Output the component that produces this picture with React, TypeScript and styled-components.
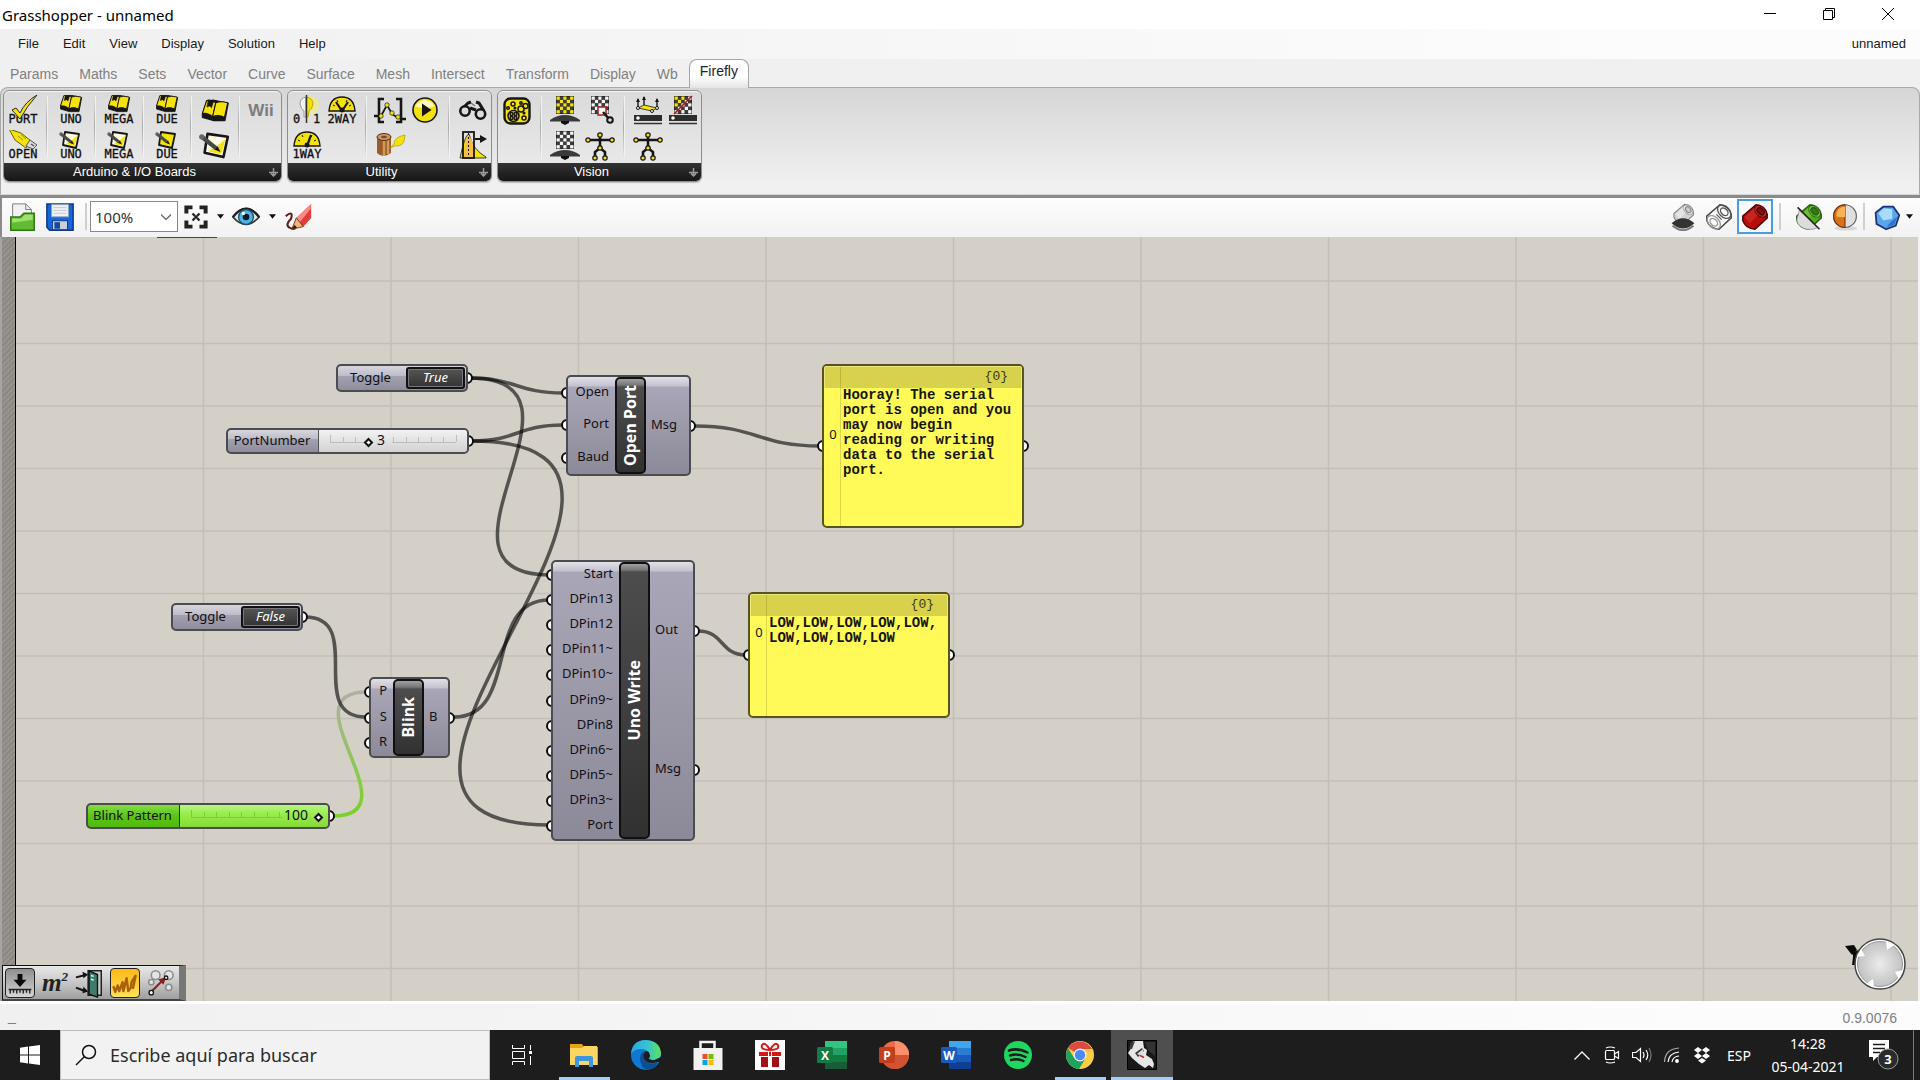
import React from "react";
import styled, { createGlobalStyle, css } from "styled-components";

const UI = `"Noto Sans", "Open Sans", sans-serif`;
const CLASSIC = `"Liberation Sans", Arial, sans-serif`;
const MONO = `"Liberation Mono", "Courier New", monospace`;

const GlobalStyle = createGlobalStyle`
  * { box-sizing: border-box; }
  body { margin: 0; background: #f0f0f0; font-family: ${UI}; }
  button, input, select { font: inherit; color: inherit; margin: 0; }
  button { border: 0; padding: 0; background: none; cursor: default; }
  svg { display: block; }
`;

const Shell = styled.div`
  display: flex;
  flex-direction: column;
  min-height: 100vh;
  overflow: hidden;
`;

/* ---------- window title and menu ---------- */

const TitleBar = styled.header`
  display: flex;
  justify-content: space-between;
  height: 29px;
  background: #fff;
`;
const Title = styled.h1`
  margin: 0;
  padding: 2px;
  font: 400 15px/26px ${UI};
  color: #000;
  white-space: nowrap;
`;
const WindowButtons = styled.div`
  display: flex;
  padding-right: 3px;
`;
const WindowButton = styled.button`
  display: grid;
  place-items: center;
  width: 59px;
  height: 28px;
`;
const MenuBar = styled.nav`
  display: flex;
  align-items: center;
  gap: 24px;
  height: 30px;
  padding: 0 14px 0 18px;
  background: linear-gradient(90deg, #f0f0f0, #fcfcfc 85%);
  font: 13px/20px ${CLASSIC};
  color: #1a1a1a;
`;
const MenuButton = styled.button<{ $end?: boolean }>`
  white-space: nowrap;
  margin-left: ${(p) => (p.$end ? "auto" : "0")};
`;

/* ---------- ribbon ---------- */

const Tabs = styled.div`
  display: flex;
  align-items: flex-end;
  gap: 1px;
  height: 28px;
  background: #f0f0f0;
  font: 14px/20px ${CLASSIC};
`;
const Tab = styled.button<{ $active?: boolean }>`
  height: 27px;
  padding: 0 10px;
  color: #808080;
  white-space: nowrap;
  ${(p) =>
    p.$active &&
    css`
      position: relative;
      height: 29px;
      margin-bottom: -1px;
      padding-bottom: 6px;
      color: #1c2033;
      background: linear-gradient(#fff 60%, #e4e4e4);
      border: 1px solid #a6a6a6;
      border-bottom: 0;
      border-radius: 8px 8px 0 0;
    `}
`;
const Ribbon = styled.div`
  display: flex;
  align-items: flex-start;
  gap: 5px;
  height: 108px;
  padding: 2px;
  border: 1px solid #a9a9a9;
  border-bottom-color: transparent;
  border-radius: 8px 8px 0 0;
  background: linear-gradient(#d6d6d6, #f0f0f0 90%);
`;
const Group = styled.section`
  display: flex;
  flex-direction: column;
  height: 92px;
  border: 1px solid #8f8f8f;
  border-radius: 6px;
  overflow: hidden;
  background: linear-gradient(#dadada, #ececec);
  box-shadow: 0 1px 1px #bbb, inset 0 1px 0 #f6f6f6;
`;
const GroupIcons = styled.div`
  display: flex;
  padding: 2px 1px 0;
  height: 73px;
`;
const IconColumn = styled.div`
  display: flex;
  flex-direction: column;
`;
const ToolButton = styled.button`
  display: grid;
  place-items: center;
  width: 35px;
  height: 35px;
`;
const Separator = styled.i`
  width: 2px;
  height: 62px;
  margin: 3px 5px 0 6px;
  background: linear-gradient(transparent, #a8a8a8 50%, transparent);
  border-right: 1px solid #f2f2f2;
`;
const GroupTitle = styled.div`
  display: flex;
  align-items: center;
  height: 18px;
  background: linear-gradient(#333, #161616);
  color: #fff;
  font: 13px/16px ${CLASSIC};
`;
const GroupName = styled.span`
  flex: 1;
  text-align: center;
  white-space: nowrap;
`;
const GroupMore = styled.button`
  width: 16px;
  color: #9a9a9a;
  display: grid;
  place-items: center;
`;

/* ---------- canvas toolbar ---------- */

const ToolBar = styled.div`
  display: flex;
  align-items: center;
  height: 42px;
  padding: 0 5px 2px 4px;
  border-top: 3px solid #8b8b8b;
  border-left: 2px solid #8b8b8b;
  background: linear-gradient(#fdfdfd, #f2f2f2);
`;
const BarButton = styled.button<{ $w?: number; $on?: boolean }>`
  display: grid;
  place-items: center;
  width: ${(p) => p.$w ?? 36}px;
  height: 35px;
  border: ${(p) => (p.$on ? "2px solid #4a9be0" : "0")};
  background: ${(p) => (p.$on ? "#f6f8fb" : "none")};
`;
const BarLine = styled.i<{ $gap: number }>`
  width: 2px;
  height: 27px;
  margin: 0 ${(p) => p.$gap}px;
  background: #cfcfcf;
`;
const ZoomField = styled.div`
  display: flex;
  align-items: center;
  width: 88px;
  height: 31px;
  border: 1px solid #8a8a8a;
  background: #fff;
`;
const ZoomSelect = styled.select`
  flex: 1;
  min-width: 0;
  height: 29px;
  padding: 0 4px;
  border: 0;
  appearance: none;
  background: none;
  font: 15px/20px ${UI};
  color: #333;
`;
const Push = styled.span`
  flex: 1;
`;

/* ---------- canvas ---------- */

const Canvas = styled.main`
  position: relative;
  flex: 1 0 764px;
  overflow: hidden;
  background: #d4d0c8;
  border-right: 2px solid #f4f4f4;
`;
const Backdrop = styled.svg`
  position: absolute;
  inset: 0;
  width: 100%;
  height: 100%;
`;
const Rail = styled.div`
  position: absolute;
  inset: 0 auto 0 0;
  width: 16px;
  border-left: 2px solid #a5a5a5;
  border-right: 1px solid #000;
  background: repeating-linear-gradient(135deg, #8b8982 0 2px, #96948d 2px 4px);
`;
const TabHint = styled.i`
  position: absolute;
  left: 157px;
  top: 0;
  width: 60px;
  height: 1px;
  background: #444;
`;

const Place = styled.div<{ $x: number; $y: number; $w: number; $h: number }>`
  position: absolute;
  isolation: isolate;
  left: ${(p) => p.$x}px;
  top: ${(p) => p.$y}px;
  width: ${(p) => p.$w}px;
  height: ${(p) => p.$h}px;
`;
const Body = styled.div<{ $tone?: "green" | "short" }>`
  display: flex;
  width: 100%;
  height: 100%;
  border: 2px solid #4c4b50;
  border-radius: 5px;
  font: 13px/18px ${UI};
  color: #121014;
  background: ${(p) =>
    p.$tone === "green"
      ? "linear-gradient(#84dc45, #5cc417 50%, #52b90d)"
      : p.$tone === "short"
        ? "linear-gradient(#d8d7df, #bdbcc8 40%, #a3a2b1 42%, #8f8d9b)"
        : "linear-gradient(#e2e1e8, #c3c2cd 9px, #a9a7b7 10px, #8c8a98)"};
`;
const Column = styled.div<{ $side: "in" | "out" }>`
  display: flex;
  flex-direction: column;
  flex: ${(p) => (p.$side === "out" ? "1" : "none")};
`;
const PinRow = styled.div<{ $side: "in" | "out"; $w?: number }>`
  position: relative;
  flex: 1;
  display: flex;
  align-items: center;
  justify-content: ${(p) => (p.$side === "in" ? "flex-end" : "flex-start")};
  width: ${(p) => (p.$w ? `${p.$w}px` : "auto")};
  padding: 0 6px 4px 5px;
`;
const Grip = styled.i<{ $side: "in" | "out" }>`
  position: absolute;
  z-index: -1;
  top: calc(50% - 6px);
  ${(p) => (p.$side === "in" ? "left" : "right")}: -7px;
  width: 12px;
  height: 12px;
  border: 2px solid #0a0a0a;
  border-radius: 50%;
  background: #fff;
`;
const Core = styled.div`
  display: grid;
  place-items: center;
  width: 31px;
  padding-right: 2px;
  border: 2px solid #101010;
  border-radius: 5px;
  background: linear-gradient(#a0a0a0, #777 6px, #4d4d4d 8px, #313131);
  color: #fff;
`;
const CoreText = styled.span`
  writing-mode: vertical-rl;
  transform: rotate(180deg);
  font: 700 16px/20px ${UI};
  white-space: nowrap;
`;
const NodeLabel = styled.label<{ $w: number }>`
  display: grid;
  place-items: center;
  width: ${(p) => p.$w}px;
  padding: 0 2px 3px 0;
  white-space: nowrap;
`;
const ToggleButton = styled.button`
  flex: 1;
  margin: 1px;
  padding-bottom: 3px;
  border: 2px solid #111;
  outline: 1px solid #77767e;
  outline-offset: -3px;
  border-radius: 3px;
  background: linear-gradient(#555, #333);
  color: #fff;
  font: italic 13px/16px ${UI};
`;
const SliderTrack = styled.div<{ $green?: boolean }>`
  position: relative;
  flex: 1;
  display: flex;
  align-items: center;
  justify-content: center;
  border-left: 1px solid ${(p) => (p.$green ? "#1d3b0b" : "#555")};
  border-radius: 0 3px 3px 0;
  background: ${(p) =>
    p.$green
      ? "linear-gradient(#b9f586, #97ee4c 40%, #86da35)"
      : "linear-gradient(#f2f2f2, #d2d2d2)"};
`;
const Ticks = styled.svg`
  position: absolute;
  top: 5px;
  left: calc(50% - 64px);
`;
const Range = styled.input`
  position: relative;
  width: 134px;
  height: 16px;
  appearance: none;
  background: none;
  &::-webkit-slider-thumb {
    appearance: none;
    width: 7px;
    height: 7px;
    margin: 2px 1px 0;
    border: 2px solid #111;
    background: #fff;
    transform: rotate(45deg);
  }
`;
const SliderValue = styled.output<{ $left: number }>`
  position: absolute;
  top: 0;
  left: ${(p) => p.$left}px;
  font: 14px/20px ${UI};
`;

/* ---------- text panels ---------- */

const PanelBody = styled.div`
  display: flex;
  flex-direction: column;
  width: 100%;
  height: 100%;
  border: 2px solid #56541f;
  border-radius: 5px;
  background: linear-gradient(90deg, transparent 16px, #dcd64a 16px 17px, transparent 17px), #fffa58;
  overflow: hidden;
`;
const PanelHead = styled.div`
  height: 22px;
  padding-right: 13px;
  border: 1px solid #ece67c;
  border-bottom: 0;
  background: linear-gradient(90deg, transparent 15px, #bdb741 15px 16px, transparent 16px), #d7d14c;
  text-align: right;
  font: 13px/20px ${MONO};
  color: #3d3b14;
`;
const PanelItem = styled.div`
  display: grid;
  grid-template-columns: 18px 1fr;
  align-items: center;
  font: 14px/15px ${MONO};
  color: #15150a;
`;
const PanelIndex = styled.span`
  padding-top: 3px;
  font: 13px/15px ${UI};
  text-align: center;
`;
const PanelText = styled.p`
  margin: 0;
  padding: 0 8px 0 1px;
  font-weight: 700;
  white-space: pre-line;
`;
const GripHost = styled.div<{ $side: "in" | "out"; $y: number }>`
  position: absolute;
  top: ${(p) => p.$y}px;
  ${(p) => (p.$side === "in" ? "left" : "right")}: 2px;
`;

/* ---------- overlays ---------- */

const Palette = styled.div`
  position: absolute;
  left: 2px;
  bottom: 0;
  display: flex;
  align-items: center;
  gap: 5px;
  width: 184px;
  height: 36px;
  padding-left: 2px;
  border: 1px solid #111;
  border-bottom: 2px solid #444;
  border-right: 7px solid #777;
  background: linear-gradient(#e8e8e8, #cfcfcf 40%, #9f9f9f);
`;
const PaletteButton = styled.button<{ $fill?: string }>`
  display: grid;
  place-items: center;
  width: 30px;
  height: 30px;
  border-radius: 4px;
  ${(p) =>
    p.$fill &&
    css`
      border: 1px solid #222;
      background: ${p.$fill};
    `}
`;
const Compass = styled.svg`
  position: absolute;
  right: 12px;
  bottom: 8px;
`;

/* ---------- status and taskbar ---------- */

const StatusBar = styled.footer`
  display: flex;
  justify-content: space-between;
  height: 29px;
  padding: 2px 23px 0 8px;
  border-top: 3px solid #fff;
  background: linear-gradient(90deg, #f0f0f0, #fcfcfc 90%);
  font: 14px/24px ${CLASSIC};
  color: #7c8086;
`;
const StatusHint = styled.span`
  line-height: 20px;
`;
const TaskBar = styled.footer`
  display: flex;
  height: 50px;
  background: #1d1d1d;
  color: #fff;
`;
const StartButton = styled.button`
  display: grid;
  place-items: center;
  width: 60px;
`;
const Search = styled.label`
  display: flex;
  align-items: center;
  gap: 13px;
  width: 430px;
  margin-right: 1px;
  padding-left: 14px;
  border: 1px solid #bdbdbd;
  background: #f2f2f2;
`;
const SearchInput = styled.input`
  flex: 1;
  min-width: 0;
  padding: 0;
  border: 0;
  outline: 0;
  background: none;
  font: 18px/26px ${UI};
  &::placeholder { color: #2b2b2b; opacity: 1; }
`;
const Task = styled.button<{ $state?: "open" | "active" }>`
  display: grid;
  place-items: center;
  width: 62px;
  background: ${(p) => (p.$state === "active" ? "#4f4f4f" : "none")};
  ${(p) =>
    p.$state &&
    css`
      background-image: linear-gradient(#a5cdf8, #a5cdf8);
      background-size: ${p.$state === "active" ? "62px" : "51px"} 3px;
      background-position: center bottom;
      background-repeat: no-repeat;
    `}
`;
const Tray = styled.div`
  display: flex;
  align-items: center;
  margin-left: auto;
  font: 14px/23px ${UI};
`;
const TrayButton = styled.button<{ $w?: number }>`
  display: grid;
  place-items: center;
  width: ${(p) => p.$w ?? 30}px;
  height: 50px;
  text-align: center;
  white-space: nowrap;
`;
const ShowDesktop = styled.button`
  width: 7px;
  height: 50px;
  border-left: 1px solid #777;
`;

/* ---------- ribbon drawings ---------- */

const Y = "#f4e20a";
const K = "#161616";

const Svg = ({ children, s = 32 }: { children: React.ReactNode; s?: number }) => (
  <svg width={s} height={s} viewBox="0 0 32 32" aria-hidden="true">
    {children}
  </svg>
);
const Caption = ({ children }: { children: string }) => (
  <text x="16" y="28" textAnchor="middle" fontFamily="DejaVu Sans Mono, monospace" fontSize="12" fill="#111" stroke="#111" strokeWidth=".3">
    {children}
  </text>
);
const BookShape = () => (
  <g stroke={K} strokeLinejoin="round">
    <path d="M4 14 8 2 14 1 28 4 25 20 14 20 4 17Z" fill={K} strokeWidth="1" />
    <path d="M4 13.500 8 1.500 Q12 0 16.500 3.500 L13.500 16.500 Q9 12.500 4 13.500Z" fill={Y} strokeWidth="1" />
    <path d="M16.500 3.500 Q21 1.500 27.500 3.500 L24.500 17 Q19 14 13.500 16.500Z" fill={Y} strokeWidth="1" />
    <path d="M9.500 1 14.500 2 12.500 8 10.800 6.500 8.200 7.500Z" fill={K} strokeWidth=".5" />
  </g>
);
const NoteShape = ({ yellow }: { yellow?: boolean }) => (
  <g>
    <path d="M10 2 24 4 21 18 8 15Z" fill={yellow ? Y : "#fffce0"} stroke={K} strokeWidth="1.800" strokeLinejoin="round" />
    <path d="M22.500 5.500 19.500 16 10.500 14 16 11Z" fill={Y} />
    <path d="M6 4 16 12" stroke="#4a4a4a" strokeWidth="3" />
    <path d="M15 13 19 14.500 17 10.500Z" fill={K} />
    <circle cx="6" cy="4" r="1.800" fill="#666" />
  </g>
);
const Book = ({ text }: { text?: string }) => (
  <Svg>
    {text ? (
      <>
        <g transform="translate(2 -1) scale(.88)"><BookShape /></g>
        <Caption>{text}</Caption>
      </>
    ) : (
      <g transform="translate(-1 4) scale(1.080)"><BookShape /></g>
    )}
  </Svg>
);
const Note = ({ text, yellow }: { text?: string; yellow?: boolean }) => (
  <Svg>
    {text ? (
      <>
        <NoteShape yellow={yellow} />
        <Caption>{text}</Caption>
      </>
    ) : (
      <g transform="translate(-6 1) scale(1.450)"><NoteShape /></g>
    )}
  </Svg>
);
const PortCheck = () => (
  <Svg>
    <Caption>PORT</Caption>
    <path d="M5 15 9 13 13 18 Q18 7 30 0 Q20 11 13 24Z" fill={Y} stroke={K} strokeWidth=".9" />
  </Svg>
);
const PortOpen = () => (
  <Svg>
    <Caption>OPEN</Caption>
    <path d="M2 -1 14 3 24 11 19 18 8 10Z" fill={Y} stroke="#6b6206" />
    <path d="M11 6 16 10 M14 4.500 19 9" stroke="#a39708" />
    <path d="M23 10 30 15 26 19 19 16Z" fill="#d8dce2" stroke="#555" />
    <path d="M24 14 27 16" stroke="#555" strokeWidth="1.500" />
  </Svg>
);
const Wii = () => (
  <Svg>
    <text x="14" y="21" textAnchor="middle" fontFamily="Liberation Sans, sans-serif" fontWeight="700" fontSize="17" fill="#7c7c7c">Wii</text>
  </Svg>
);
const Bulb = () => (
  <Svg>
    <circle cx="19" cy="10" r="9" fill="#f6f06a" opacity=".6" />
    <path d="M15 2 Q9 3 9 9 Q10 14 13 16 L13 22 15 22Z" fill="#f3f3ee" stroke="#999" />
    <path d="M15 2 Q22 3 22 9 Q21 14 18 16 L17 22 15 22Z" fill={Y} stroke="#b3a50c" />
    <path d="M15.500 0V28" stroke="#333" strokeWidth="1.500" />
    <g fontFamily="DejaVu Sans Mono, monospace" fontSize="12" fill="#111" stroke="#111" strokeWidth=".3">
      <text x="2" y="28">0</text>
      <text x="22" y="28">1</text>
    </g>
  </Svg>
);
const Gauge = ({ text, both }: { text: string; both?: boolean }) => (
  <Svg>
    <path d="M3 16 Q4 2 16 2 Q28 2 29 16Z" fill={Y} stroke={K} strokeWidth="1.400" />
    <path d="M7 10 9 11 M11 5 12 7 M21 5 20 7 M25 10 23 11" stroke={K} />
    <path d={both ? "M16 16 10 7 M16 16 22 7" : "M16 16 20 5"} stroke={K} strokeWidth="2.200" />
    <circle cx="16" cy="15" r="2.500" fill={K} />
    <Caption>{text}</Caption>
  </Svg>
);
const Buffer = () => (
  <Svg>
    <path d="M10 4H5V27H10 M22 4H27V27H22 M0 21H5 M27 24H32" fill="none" stroke={K} strokeWidth="2.600" />
    <path d="M7 21 13 10 18 19 24 23" fill="none" stroke={K} strokeWidth="1.700" />
    {[[7, 21], [13, 10], [18, 18], [24, 22]].map(([x, y]) => (
      <circle key={x} cx={x} cy={y} r="2.200" fill={Y} stroke={K} strokeWidth=".7" />
    ))}
  </Svg>
);
const Play = () => (
  <Svg>
    <circle cx="16" cy="15" r="12" fill={Y} stroke={K} strokeWidth="1.600" />
    <path d="M6 11 Q16 -1 26 11 Q16 15 6 11Z" fill="#fffbd0" opacity=".9" />
    <path d="M13 8.500 22.500 15 13 21.500Z" fill={K} />
  </Svg>
);
const Binoculars = () => (
  <Svg>
    <path d="M6 13 11 8 14 7 M27 16 22 8 19 7 M13 13 19 15" stroke={K} strokeWidth="3" fill="none" />
    <circle cx="8" cy="16" r="4.700" fill="#dcdcdc" stroke={K} strokeWidth="2.600" />
    <circle cx="23.500" cy="19" r="4.700" fill="#dcdcdc" stroke={K} strokeWidth="2.600" />
    <path d="M14 8 18 11" stroke="#777" strokeWidth="1.500" />
  </Svg>
);
const Log = () => (
  <Svg>
    <path d="M3 6V23Q9 29 17 23V6Z" fill="#9b5a28" />
    <path d="M10 9V26 M14 8V24" stroke="#d09a5a" strokeWidth="2.500" />
    <ellipse cx="10" cy="7" rx="7" ry="3.500" fill="#c99868" stroke="#5c2f10" />
    <ellipse cx="10" cy="7" rx="3" ry="1.300" fill="#7b4a22" />
    <path d="M16 18 20 14 Q20 7 31 5 Q31 17 21 16Z" fill={Y} stroke="#a79a0a" strokeWidth=".7" />
  </Svg>
);
const Smooth = () => (
  <Svg>
    <path d="M3 28 Q8 4 12 4 Q16 20 29 27V28Z" fill={Y} stroke={K} strokeWidth=".8" />
    <path d="M7 28 Q8 6 11 6 Q17 8 17 28Z" fill="#f6bd4e" />
    <rect x="6" y="2" width="11" height="26" fill="none" stroke={K} strokeWidth="1.800" />
    <path d="M11.500 3V27" stroke={K} strokeDasharray="2 2" />
    <path d="M18 9H24" stroke={K} strokeWidth="1.800" />
    <path d="M23 5 30 9 23 13Z" fill={K} />
  </Svg>
);
const Bacteria = () => (
  <Svg>
    <rect x="3.500" y="3.500" width="25" height="25" rx="6" fill={Y} stroke={K} strokeWidth="2.400" />
    <g fill="none" stroke={K} strokeWidth="1.500">
      <circle cx="12.500" cy="21" r="5.500" />
      <circle cx="10.500" cy="19" r="1.500" /><circle cx="14.500" cy="19" r="1.500" />
      <circle cx="10.500" cy="23" r="1.500" /><circle cx="14.500" cy="23" r="1.500" />
      <circle cx="12" cy="9" r="2" /><circle cx="20" cy="8" r="1.200" />
      <circle cx="20" cy="14" r="3" /><circle cx="24.500" cy="11" r="2.500" />
      <circle cx="23" cy="23" r="2" /><circle cx="7" cy="13" r="1.300" />
      <circle cx="14" cy="13" r=".8" /><circle cx="23" cy="18" r=".8" />
    </g>
  </Svg>
);
const Checker = ({ c }: { c: (i: number, j: number) => string }) => (
  <g>
    <rect x="7" y="1" width="18" height="18" fill={K} />
    {Array.from({ length: 25 }, (_, k) => {
      const i = k % 5;
      const j = Math.floor(k / 5);
      return (
        <rect key={k} x={7.5 + i * 3.4} y={1.5 + j * 3.4} width={3.4} height={3.4} fill={(i + j) % 2 ? "#3d3d3d" : c(i, j)} />
      );
    })}
  </g>
);
const Stand = () => (
  <g fill="#3a3a3a">
    <path d="M1 25Q8 20 16 20Q24 20 31 25V26.500H1Z" />
    <path d="M12 26H20V28L16 30 12 28Z" fill="#111" />
  </g>
);
const Screen = ({ yellow }: { yellow?: boolean }) => (
  <Svg>
    <Checker c={() => (yellow ? Y : "#f4f4f4")} />
    <Stand />
  </Svg>
);
const Tracker = () => (
  <Svg>
    <Checker c={() => "#f4f4f4"} />
    <rect x="14" y="12" width="8" height="8" fill="#fff" stroke="#b01818" strokeWidth="1.500" />
    <path d="M19 17 26 25" stroke={K} strokeWidth="2.400" />
    <circle cx="26" cy="25" r="2.800" fill="#ddd" stroke={K} strokeWidth="2" />
  </Svg>
);
const Skeleton = () => (
  <Svg>
    <path d="M4 10H28 M16 6V18 M16 18 11 22V27 M16 18 21 22V27" fill="none" stroke={K} strokeWidth="2.600" />
    {[[16, 5], [4, 10], [28, 10], [16, 18], [11, 28], [21, 28]].map(([x, y], i) => (
      <circle key={i} cx={x} cy={y} r="2.200" fill={Y} stroke={K} strokeWidth="1.200" />
    ))}
  </Svg>
);
const DepthBar = () => (
  <>
    <rect x="2" y="20" width="28" height="6" fill="#2c2c2c" />
    <circle cx="6" cy="23" r="1.800" fill="#fff" />
    <path d="M2 28.500H30" stroke="#333" strokeWidth="1.500" />
  </>
);
const Depth = () => (
  <Svg>
    <path d="M6 13 12 10 25 13 20 16Z" fill={Y} stroke={K} strokeWidth=".8" />
    <path d="M6 13V4 M12 10V2 M25 13V4" stroke={K} strokeWidth="1.400" />
    <path d="M4 7 6 3 8 7Z M10 5 12 1 14 5Z M23 7 25 3 27 7Z" fill={K} />
    <g fill="#fff" stroke={K}><circle cx="6" cy="13" r="1.500" /><circle cx="20" cy="16" r="1.500" /><circle cx="25" cy="13" r="1.500" /></g>
    <DepthBar />
  </Svg>
);
const DepthScreen = () => (
  <Svg>
    <Checker c={(i, j) => (i + j < 4 ? Y : "#f4f4f4")} />
    <path d="M7 19 25 1" stroke="#b01818" strokeWidth="1.600" />
    <DepthBar />
  </Svg>
);

/* ---------- toolbar drawings ---------- */

const Folder = () => (
  <Svg s={30}>
    <path d="M6 2H20L26 8V20H6V3Z" fill="#f2f2f2" stroke="#777" />
    <path d="M20 2V8H26" fill="none" stroke="#777" />
    <path d="M4 16H14L18 12H29V30H4Z" fill="#62bb34" stroke="#2d7a12" strokeWidth="1.600" />
    <path d="M5.500 17.500H15L19 13.500H27.500V19L5.500 22Z" fill="#9fe070" />
  </Svg>
);
const Disk = () => (
  <Svg s={30}>
    <path d="M2 2H30V30H5L2 27Z" fill="#1565dc" stroke="#123a86" strokeWidth="1.600" />
    <rect x="7" y="2.800" width="18" height="13" fill="#f0f2f5" stroke="#8ea3c4" />
    <path d="M9 6H23 M9 9H23 M9 12H23" stroke="#c0c6d0" />
    <rect x="8" y="20" width="16" height="9.500" fill="#c9d0dc" stroke="#123a86" />
    <rect x="10" y="21.500" width="6" height="7" fill="#174a9e" />
  </Svg>
);
const Frame = () => (
  <Svg s={28}>
    <path d="M5 12V5H12 M20 5H27V12 M27 20V27H20 M12 27H5V20" fill="none" stroke="#222" strokeWidth="4.500" />
    <path d="M12 12 14.500 14.500 M20 12 17.500 14.500 M12 20 14.500 17.500 M20 20 17.500 17.500" stroke="#222" strokeWidth="2.600" />
    <rect x="14" y="14" width="4" height="4" fill="#222" />
  </Svg>
);
const Caret = () => (
  <svg width="7" height="5" viewBox="0 0 8 5" aria-hidden="true"><path d="M0 0H8L4 5Z" fill="#111" /></svg>
);
const Eye = () => (
  <Svg s={28}>
    <path d="M1 16 Q16 -3 31 16 Q16 33 1 16Z" fill="#dfe6e8" stroke="#333" strokeWidth="2" />
    <path d="M1 16 Q16 -3 31 16" fill="none" stroke="#222" strokeWidth="2.600" />
    <circle cx="16" cy="16" r="8.500" fill="#4fb4e2" stroke="#15506f" strokeWidth="1.500" />
    <circle cx="16" cy="16" r="3.800" fill="#0b1c28" />
    <circle cx="13" cy="12" r="2" fill="#e6f7ff" />
  </Svg>
);
const Crayon = () => (
  <Svg s={28}>
    <path d="M2 15 Q11 8 8 18 Q1 25 6 28 Q9 30 13 29" fill="none" stroke="#5a2018" strokeWidth="2.400" />
    <path d="M14 17 31 1V17L22 27Z" fill="#e23b3b" />
    <path d="M14 17 31 1 30 7 18 22Z" fill="#f58d86" />
    <path d="M14 17 22 27 9 30Z" fill="#e9b877" stroke="#6d2b18" />
    <path d="M12 25 15 28 9 30Z" fill="#3b1410" />
  </Svg>
);
const Tube = ({ fill, edge, hole, light }: { fill: string; edge: string; hole: string; light: string }) => (
  <g stroke={edge} strokeWidth="1.600" strokeLinejoin="round">
    <path d="M17 2 Q27 3 30 13 L30 17 16 30 Q5 29 2 20 L2 15Z" fill={fill} />
    <path d="M4 16 17 4 Q19 8 22 11 L10 23Z" fill={light} stroke="none" opacity=".4" />
    <ellipse cx="22.500" cy="9.500" rx="8" ry="5.500" transform="rotate(45 22.500 9.500)" fill={light} opacity=".6" />
    <ellipse cx="22.500" cy="9.500" rx="4.800" ry="3.200" transform="rotate(45 22.500 9.500)" fill={hole} />
  </g>
);
const HiddenTube = () => (
  <Svg s={28}>
    <g transform="translate(4 0) scale(.8)"><Tube fill="#d2d2d2" edge="#888" hole="#ccc" light="#fff" /></g>
    <path d="M3 23 Q16 12 29 23 Q16 35 3 23Z" fill="#333" />
    <path d="M4 26 Q16 36 28 26" fill="none" stroke="#777" strokeWidth="2" />
  </Svg>
);
const WireTube = () => (
  <Svg s={28}>
    <path d="M17 2 Q27 3 30 13 L30 17 16 30 Q5 29 2 20 L2 15Z" fill="#fafafa" stroke="#444" strokeWidth="1.600" />
    <g fill="none" stroke="#555" strokeWidth="1.500">
      <ellipse cx="22" cy="10" rx="9" ry="6" transform="rotate(45 22 10)" />
      <ellipse cx="22" cy="10" rx="5" ry="3.500" transform="rotate(45 22 10)" />
      <g stroke="#999">
        <ellipse cx="10" cy="22" rx="9" ry="6" transform="rotate(45 10 22)" />
        <ellipse cx="10" cy="22" rx="5" ry="3.500" transform="rotate(45 10 22)" />
      </g>
      <path d="M13 13 19 19" />
    </g>
  </Svg>
);
const RedTube = () => <Svg s={28}><Tube fill="#b80d0d" edge="#4a0606" hole="#8c0808" light="#e04a40" /></Svg>;
const GreenTube = () => (
  <Svg s={28}>
    <Tube fill="#4fae1c" edge="#2c5c12" hole="#2d7d0c" light="#93dd58" />
    <path d="M5 8 26 28 Q21 31 14 30 Q4 28 2 20Z" fill="#dcdcdc" stroke="#999" />
    <path d="M3 5 28 30" stroke="#222" strokeWidth="1.800" />
  </Svg>
);
const HalfBall = () => (
  <Svg s={28}>
    <ellipse cx="17" cy="29" rx="13" ry="2.500" fill="#d8d8d8" />
    <circle cx="16" cy="15" r="13" fill="#dfdfdf" stroke="#666" strokeWidth="1.400" />
    <path d="M16 2A13 13 0 0 0 16 28Z" fill="#d9711a" stroke="#6b2c0a" strokeWidth="1.200" />
    <path d="M16 4A10 10 0 0 0 6 15Q11 17 16 16Z" fill="#f7b356" />
  </Svg>
);
const Gem = () => (
  <Svg s={28}>
    <path d="M12 4 23 4 30 14 26 26 15 30 4 24 3 11Z" fill="#58a7ea" stroke="#1d2f78" strokeWidth="2" strokeLinejoin="round" />
    <path d="M12 6 22 7 22 18 12 20 6 12Z" fill="#a9dcfa" />
    <path d="M15 28 24 25 28 15 20 22Z" fill="#3572c8" />
  </Svg>
);

/* ---------- palette drawings ---------- */

const Stamp = () => (
  <Svg s={26}>
    <path d="M13 5H19V12H24L16 21 8 12H13Z" fill="#0b0b0b" />
    <path d="M2 24H30 M4 24V29 M8 24V28 M12 24V29 M16 24V28 M20 24V29 M24 24V28 M28 24V29" stroke="#222" strokeWidth="1.700" />
  </Svg>
);
const SquareMetre = () => (
  <Svg s={30}>
    <g fontFamily="Liberation Serif, serif" fontStyle="italic" fontWeight="700" fill="#222">
      <text x="2" y="25" fontSize="27">m</text>
      <text x="23" y="14" fontSize="14">2</text>
    </g>
  </Svg>
);
const Door = () => (
  <Svg s={30}>
    <path d="M14 3H28V29H14Z" fill="#c9cfcd" stroke="#222" strokeWidth="1.600" />
    <path d="M15 3 24 7V31L15 28Z" fill="#3f7a6e" stroke="#111" strokeWidth="1.500" />
    <path d="M17 8 20 9 M17 12 20 13" stroke="#cfe" strokeWidth="1.500" />
    <path d="M1 10 9 8 M1 21 9 24" stroke="#111" strokeWidth="2" />
    <path d="M8 4 14 7 9 11Z M9 20 14 25 8 27Z" fill="#111" />
  </Svg>
);
const Scribble = () => (
  <Svg s={26}>
    <path d="M2 21 4 27 7 19 9 26 13 15 14 26 18 10 20 26 23 22 24 15 29 7 26 22" fill="none" stroke="#a9620a" strokeWidth="3" strokeLinecap="round" strokeLinejoin="round" />
  </Svg>
);
const Links = () => (
  <Svg s={28}>
    <g fill="#e4e4e4" stroke="#8d8d8d" strokeWidth="1.800">
      <circle cx="11" cy="7" r="5" /><circle cx="26" cy="7" r="5" />
      <circle cx="6" cy="15" r="3" /><circle cx="26" cy="21" r="3.500" />
    </g>
    <path d="M6 26 20 12" stroke="#8d1d1d" strokeWidth="2.200" />
    <path d="M23 9 14 12 20 18Z" fill="#8d1d1d" />
    <circle cx="6" cy="27" r="2.500" fill="#fff" stroke="#111" strokeWidth="1.500" />
    <circle cx="23" cy="10" r="2" fill="#fff" stroke="#111" strokeWidth="1.500" />
  </Svg>
);

/* ---------- data ---------- */

const tabs = ["Params", "Maths", "Sets", "Vector", "Curve", "Surface", "Mesh", "Intersect", "Transform", "Display", "Wb", "Firefly"];
const menus = ["File", "Edit", "View", "Display", "Solution", "Help"];

type Tool = { name: string; icon: React.ReactNode };
type Slot = Tool[] | null;
const t = (name: string, icon: React.ReactNode): Tool => ({ name, icon });

/* null marks a separator between two clusters of columns */
const groups: { name: string; slots: Slot[] }[] = [
  {
    name: "Arduino & I/O Boards",
    slots: [
      [t("Ports available", <PortCheck />), t("Open port", <PortOpen />)], null,
      [t("Uno read", <Book text="UNO" />), t("Uno write", <Note text="UNO" />)], null,
      [t("Mega read", <Book text="MEGA" />), t("Mega write", <Note text="MEGA" />)], null,
      [t("Due read", <Book text="DUE" />), t("Due write", <Note text="DUE" yellow />)], null,
      [t("Serial read", <Book />), t("Serial write", <Note />)], null,
      [t("Wiimote", <Wii />)],
    ],
  },
  {
    name: "Utility",
    slots: [
      [t("Blink", <Bulb />), t("One way fader", <Gauge text="1WAY" />)],
      [t("Two way fader", <Gauge text="2WAY" both />)], null,
      [t("Buffer", <Buffer />), t("Data log", <Log />)],
      [t("Playback", <Play />)], null,
      [t("State search", <Binoculars />), t("Smoothing", <Smooth />)],
    ],
  },
  {
    name: "Vision",
    slots: [
      [t("Blob tracker", <Bacteria />)], null,
      [t("Video stream", <Screen yellow />), t("Bitmap", <Screen />)],
      [t("Pixel sampler", <Tracker />), t("Skeleton", <Skeleton />)], null,
      [t("Depth mesh", <Depth />), t("Skeleton tracker", <Skeleton />)],
      [t("Depth video", <DepthScreen />)],
    ],
  },
];

type Wire = [number, number, number, number, number];
/* start x, start y, end x, end y, handle length */
const wires: Wire[] = [
  [470, 141, 563, 156, 46],
  [470, 141, 550, 338, 140],
  [472, 204, 563, 188, 46],
  [472, 204, 550, 588, 277],
  [305, 380, 366, 480, 61],
  [454, 480, 549, 363, 66],
  [695, 189, 820, 209, 62],
  [698, 394, 746, 418, 26],
];
const curve = ([x1, y1, x2, y2, d]: Wire) => `M${x1} ${y1}C${x1 + d} ${y1} ${x2 - d} ${y2} ${x2} ${y2}`;

const lines = (first: number, step: number, count: number) => Array.from({ length: count }, (_, i) => first + i * step);

const Component = ({ x, y, w, h, inW, name, ins, outs }: { x: number; y: number; w: number; h: number; inW: number; name: string; ins: string[]; outs: string[] }) => (
  <Place $x={x} $y={y} $w={w} $h={h}>
    <Body>
      <Column $side="in">
        {ins.map((p) => (
          <PinRow key={p} $side="in" $w={inW}><Grip $side="in" />{p}</PinRow>
        ))}
      </Column>
      <Core><CoreText>{name}</CoreText></Core>
      <Column $side="out">
        {outs.map((p) => (
          <PinRow key={p} $side="out">{p}<Grip $side="out" /></PinRow>
        ))}
      </Column>
    </Body>
  </Place>
);

const Toggle = ({ x, y, id, value }: { x: number; y: number; id: string; value: string }) => (
  <Place $x={x} $y={y} $w={132} $h={28}>
    <Body $tone="short">
      <NodeLabel $w={67} htmlFor={id}>Toggle</NodeLabel>
      <ToggleButton id={id}>{value}</ToggleButton>
    </Body>
    <GripHost $side="out" $y={14}><Grip $side="out" /></GripHost>
  </Place>
);

const Slider = ({ x, y, w, labelW, id, label, value, max, left, ticks, green }: { x: number; y: number; w: number; labelW: number; id: string; label: string; value: number; max: number; left: number; ticks: number[]; green?: boolean }) => (
  <Place $x={x} $y={y} $w={w} $h={26}>
    <Body $tone={green ? "green" : "short"}>
      <NodeLabel $w={labelW} htmlFor={id}>{label}</NodeLabel>
      <SliderTrack $green={green}>
        <Ticks width="128" height="9" aria-hidden="true">
          <g stroke={green ? "#7fcb3c" : "#bcbcbc"} strokeWidth="1">
            {ticks.map((i) => <path key={i} d={`M${1 + Math.round(i * 12.6)}.5 ${i % 10 ? 2 : 0}V7`} />)}
            <path d={green ? "M1 7.500H92" : "M1 7.500H35 M63 7.500H127"} />
          </g>
        </Ticks>
        <Range id={id} type="range" min={0} max={max} defaultValue={value} />
        <SliderValue $left={left} htmlFor={id}>{value}</SliderValue>
      </SliderTrack>
    </Body>
    <GripHost $side="out" $y={13}><Grip $side="out" /></GripHost>
  </Place>
);

const Panel = ({ x, y, w, h, text }: { x: number; y: number; w: number; h: number; text: string }) => (
  <Place $x={x} $y={y} $w={w} $h={h}>
    <PanelBody>
      <PanelHead>{"{0}"}</PanelHead>
      <PanelItem>
        <PanelIndex>0</PanelIndex>
        <PanelText>{text}</PanelText>
      </PanelItem>
    </PanelBody>
    <GripHost $side="in" $y={h / 2}><Grip $side="in" /></GripHost>
    <GripHost $side="out" $y={h / 2}><Grip $side="out" /></GripHost>
  </Place>
);

/* ---------- taskbar drawings ---------- */

const Office = ({ letter, colors, round }: { letter: string; colors: string[]; round?: boolean }) => (
  <svg width="30" height="28" viewBox="0 0 30 28" aria-hidden="true">
    {round ? (
      <>
        <circle cx="16" cy="14" r="14" fill={colors[1]} />
        <path d="M16 0A14 14 0 0 1 30 14H16Z" fill={colors[0]} />
        <path d="M2 14A14 14 0 0 0 30 14Z" fill={colors[2]} />
      </>
    ) : (
      colors.slice(0, 4).map((c, i) => <rect key={c} x="8" y={i * 7} width="22" height="7" fill={c} />)
    )}
    <rect y="6" width="16" height="16" rx="1.500" fill={colors[4]} />
    <text x="8" y="18.500" textAnchor="middle" fontFamily="Open Sans, sans-serif" fontWeight="700" fontSize="12" fill="#fff">{letter}</text>
  </svg>
);

const TaskView = () => (
  <svg width="20" height="20" viewBox="0 0 20 20" fill="none" stroke="#fff" aria-hidden="true">
    <path d="M.5 0V3.500H12.500V0 M.5 20V16.500H12.500V20 M.5 6.500H12.500V13.500H.5Z M18.500 0V5 M18.500 11V20" />
    <rect x="17.500" y="6.500" width="2" height="2" fill="#fff" />
  </svg>
);
const Explorer = () => (
  <svg width="28" height="24" viewBox="0 0 28 24" aria-hidden="true">
    <path d="M0 1H12L14 4H28V22H0Z" fill="#e5a50d" />
    <path d="M0 5H12L14 3H27V22H0Z" fill="#fcd462" />
    <path d="M5 24V15Q5 13 7 13H21Q23 13 23 15V24H19V18H9V24Z" fill="#3b96dd" />
  </svg>
);
const Edge = () => (
  <svg width="30" height="30" viewBox="0 0 30 30" aria-hidden="true">
    <defs>
      <linearGradient id="edge-top"><stop stopColor="#2aa6e0" /><stop offset=".5" stopColor="#35c1d8" /><stop offset="1" stopColor="#5fe05a" /></linearGradient>
    </defs>
    <circle cx="15" cy="15" r="15" fill="#0e78d4" />
    <path d="M0 14Q1 0 15 0Q29 1 30 13Q30 20 22 20Q17 20 18.500 16Q18 9 10 9Q3 9 0 14Z" fill="url(#edge-top)" />
    <path d="M9 18Q9 12 15 11Q11 14 13 19Q17 26 27 22Q24 29 16 30Q9 27 9 18Z" fill="#0d4f94" />
    <path d="M18.500 14Q20 17 17.500 18Q18 20 23 20.200L30 17V22H26Q17 25 13 19Q11 14 15 11Q18 11 18.500 14Z" fill="#1d1d1d" />
  </svg>
);
const Store = () => (
  <svg width="30" height="30" viewBox="0 0 30 30" aria-hidden="true">
    <path d="M7.500 9V2H21.500V9" fill="none" stroke="#f4f4f4" strokeWidth="2.500" />
    <path d="M.5 8H29.500V30H.5Z" fill="#f1f1f1" />
    <path d="M9.500 14H14.500V19H9.500Z" fill="#f04e23" /><path d="M15.500 14H20.500V19H15.500Z" fill="#7fb900" />
    <path d="M9.500 20H14.500V25H9.500Z" fill="#00a3ee" /><path d="M15.500 20H20.500V25H15.500Z" fill="#fdb802" />
  </svg>
);
const Gift = () => (
  <svg width="30" height="30" viewBox="0 0 30 30" aria-hidden="true">
    <path d="M0 0H30V30H0Z" fill="#fff" />
    <path d="M15 10Q5 10 7 5Q10 1 15 10Q20 1 23 5Q25 10 15 10Z" fill="none" stroke="#d5171b" strokeWidth="2" />
    <path d="M4 12H13V16H4Z M17 12H26V16H17Z M14 12H16V16H14Z" fill="#d5171b" />
    <path d="M6 17H13V27H6Z M17 17H24V27H17Z" fill="#a50e12" />
  </svg>
);
const Spotify = () => (
  <svg width="28" height="28" viewBox="0 0 28 28" aria-hidden="true">
    <circle cx="14" cy="14" r="14" fill="#1fd661" />
    <path d="M5 9.500Q14 6.500 23.500 11.500 M6 14.500Q14 12 21.500 16 M7 19Q14 17 19.500 20" fill="none" stroke="#1d1d1d" strokeWidth="2.500" strokeLinecap="round" />
  </svg>
);
const Chrome = () => (
  <svg width="28" height="28" viewBox="0 0 28 28" aria-hidden="true">
    <circle cx="14" cy="14" r="14" fill="#fdce42" />
    <path d="M14 14 1.900 7A14 14 0 0 1 26.100 8H14Z" fill="#dc4b3f" />
    <path d="M1.900 7A14 14 0 0 0 13 28L19.500 17.500 14 14 8.500 17.500Z" fill="#1da260" />
    <circle cx="14" cy="14" r="6.500" fill="#f1f1f1" />
    <circle cx="14" cy="14" r="5.200" fill="#4a8af4" />
  </svg>
);
const Rhino = () => (
  <svg width="30" height="30" viewBox="0 0 30 30" aria-hidden="true">
    <path d="M.5.5H29.500V29.500H.5Z" fill="#191919" stroke="#000" />
    <path d="M1 13 5 7 6 1H16L17 8 20 10 19 15 25 19 27 24 26 28 22 25 18 28 12 24 5 18Z" fill="#e6e6e6" />
    <path d="M2 9 4 2 8 1 5 9Z M8 13 15 8 17 11 11 17Z" fill="#3a3a3a" />
    <path d="M10 14 16 9 17 17Z" fill="#ddd" />
    <path d="M13 15.500 17 17.500" stroke="#d22" strokeWidth="1.500" />
    <path d="M18 2H28V16L21 10Z" fill="#333" />
  </svg>
);

const tasks: { name: string; icon: React.ReactNode; state?: "open" | "active" }[] = [
  { name: "Task view", icon: <TaskView /> },
  { name: "File Explorer", icon: <Explorer />, state: "open" },
  { name: "Edge", icon: <Edge /> },
  { name: "Store", icon: <Store /> },
  { name: "Gifts", icon: <Gift /> },
  { name: "Excel", icon: <Office letter="X" colors={["#33c481", "#21a366", "#107c41", "#185c37", "#107c41"]} /> },
  { name: "PowerPoint", icon: <Office letter="P" round colors={["#ff8f6b", "#ed6c47", "#d35230", "", "#c43e1c"]} /> },
  { name: "Word", icon: <Office letter="W" colors={["#41a5ee", "#2b7cd3", "#185abd", "#103f91", "#185abd"]} /> },
  { name: "Spotify", icon: <Spotify /> },
  { name: "Chrome", icon: <Chrome />, state: "open" },
  { name: "Rhinoceros", icon: <Rhino />, state: "active" },
];

export default function App() {
  return (
    <Shell>
      <GlobalStyle />
      <TitleBar>
        <Title>Grasshopper - unnamed</Title>
        <WindowButtons>
          <WindowButton aria-label="Minimize">
            <svg width="12" height="12"><path d="M0 5.500H12" stroke="#000" /></svg>
          </WindowButton>
          <WindowButton aria-label="Restore">
            <svg width="12" height="12" fill="none" stroke="#000"><path d="M.5 2.500H9.500V11.500H.5Z M2.500 2.500V.5H11.500V9.500H9.500" /></svg>
          </WindowButton>
          <WindowButton aria-label="Close">
            <svg width="12" height="12"><path d="M0 0 12 12M12 0 0 12" stroke="#000" /></svg>
          </WindowButton>
        </WindowButtons>
      </TitleBar>

      <MenuBar>
        {menus.map((m) => <MenuButton key={m}>{m}</MenuButton>)}
        <MenuButton $end>unnamed</MenuButton>
      </MenuBar>

      <Tabs role="tablist">
        {tabs.map((name) => (
          <Tab key={name} role="tab" aria-selected={name === "Firefly"} $active={name === "Firefly"}>{name}</Tab>
        ))}
      </Tabs>
      <Ribbon>
        {groups.map((g) => (
          <Group key={g.name}>
            <GroupIcons>
              {g.slots.map((slot, i) =>
                slot ? (
                  <IconColumn key={i}>
                    {slot.map((tool) => <ToolButton key={tool.name} aria-label={tool.name}>{tool.icon}</ToolButton>)}
                  </IconColumn>
                ) : (
                  <Separator key={i} />
                )
              )}
            </GroupIcons>
            <GroupTitle>
              <GroupName>{g.name}</GroupName>
              <GroupMore aria-label={`More ${g.name}`}>
                <svg width="9" height="9" viewBox="0 0 9 9"><path d="M4.500 0V8M0 4.500H9M2 5.500 4.500 8 7 5.500" stroke="currentColor" strokeWidth="1.500" fill="none" /></svg>
              </GroupMore>
            </GroupTitle>
          </Group>
        ))}
      </Ribbon>

      <ToolBar>
        <BarButton $w={32} aria-label="Open"><Folder /></BarButton>
        <BarButton $w={44} aria-label="Save"><Disk /></BarButton>
        <BarLine $gap={3} />
        <ZoomField>
          <ZoomSelect aria-label="Zoom" defaultValue="100%"><option>100%</option></ZoomSelect>
          <BarButton as="span" $w={22}>
            <svg width="10" height="6" viewBox="0 0 10 6"><path d="M0 .5 5 5.500 10 .5" fill="none" stroke="#666" strokeWidth="1.300" /></svg>
          </BarButton>
        </ZoomField>
        <BarButton aria-label="Zoom extents"><Frame /></BarButton>
        <BarButton $w={12} aria-label="Zoom options"><Caret /></BarButton>
        <BarButton $w={40} aria-label="Named views"><Eye /></BarButton>
        <BarButton $w={12} aria-label="View options"><Caret /></BarButton>
        <BarButton $w={40} aria-label="Sketch"><Crayon /></BarButton>
        <Push />
        <BarButton aria-label="No preview"><HiddenTube /></BarButton>
        <BarButton aria-label="Wireframe preview"><WireTube /></BarButton>
        <BarButton $on aria-label="Shaded preview"><RedTube /></BarButton>
        <BarLine $gap={6} />
        <BarButton $w={44} aria-label="Selected preview"><GreenTube /></BarButton>
        <BarButton $w={26} aria-label="Document preview"><HalfBall /></BarButton>
        <BarLine $gap={6} />
        <BarButton $w={32} aria-label="Mesh quality"><Gem /></BarButton>
        <BarButton $w={12} aria-label="Mesh options"><Caret /></BarButton>
      </ToolBar>

      <Canvas>
        <Backdrop aria-hidden="true">
          <g stroke="#c3bfb7" strokeWidth="1.500">
            {lines(203, 187.5, 22).map((x) => <line key={x} x1={x + 0.5} x2={x + 0.5} y1="0" y2="100%" />)}
            {lines(44, 62.5, 32).map((y) => <line key={y} y1={y} y2={y} x1="0" x2="100%" />)}
          </g>
          <defs>
            <linearGradient id="picked" gradientUnits="userSpaceOnUse" x1="0" y1="579" x2="0" y2="455">
              <stop stopColor="#7bd02b" /><stop offset=".3" stopColor="#86cc45" /><stop offset="1" stopColor="#b0afa6" />
            </linearGradient>
          </defs>
          <g fill="none" strokeWidth="3.500">
            <path d={curve([333, 579, 367, 455, 83])} stroke="url(#picked)" />
            {wires.map((w, i) => <path key={i} d={curve(w)} stroke="#000" strokeOpacity=".6" />)}
          </g>
        </Backdrop>
        <Rail />
        <TabHint />

        <Toggle x={336} y={127} id="toggle-open" value="True" />
        <Slider x={226} y={191} w={243} labelW={90} id="port-number" label="PortNumber" value={3} max={10} left={58} ticks={[0, 1, 2, 5, 6, 7, 8, 9, 10]} />
        <Component x={566} y={138} w={125} h={101} inW={47} name="Open Port" ins={["Open", "Port", "Baud"]} outs={["Msg"]} />
        <Component x={551} y={323} w={144} h={281} inW={66} name="Uno Write" ins={["Start", "DPin13", "DPin12", "DPin11~", "DPin10~", "DPin9~", "DPin8", "DPin6~", "DPin5~", "DPin3~", "Port"]} outs={["Out", "Msg"]} />
        <Toggle x={171} y={366} id="toggle-blink" value="False" />
        <Component x={369} y={440} w={81} h={81} inW={22} name="Blink" ins={["P", "S", "R"]} outs={["B"]} />
        <Slider x={86} y={566} w={244} labelW={91} id="blink-pattern" label="Blink Pattern" value={100} max={100} left={104} ticks={[0, 1, 2, 3, 4, 5, 6, 7]} green />
        <Panel x={822} y={127} w={202} h={164} text="Hooray! The serial port is open and you may now begin reading or writing data to the serial port." />
        <Panel x={748} y={355} w={202} h={126} text={"LOW,LOW,LOW,LOW,LOW,\nLOW,LOW,LOW,LOW"} />

        <Palette>
          <PaletteButton $fill="linear-gradient(#8f8f8f, #d5d5d5)" aria-label="Stamp"><Stamp /></PaletteButton>
          <PaletteButton aria-label="Units"><SquareMetre /></PaletteButton>
          <PaletteButton aria-label="Exit"><Door /></PaletteButton>
          <PaletteButton $fill="linear-gradient(#fdb813, #ffe25a)" aria-label="Sketches"><Scribble /></PaletteButton>
          <PaletteButton aria-label="Links"><Links /></PaletteButton>
        </Palette>
        <Compass width="62" height="56" viewBox="0 0 62 56" aria-hidden="true">
          <defs>
            <radialGradient id="dial"><stop stopColor="#ececec" /><stop offset="1" stopColor="#c2c2c2" /></radialGradient>
          </defs>
          <path d="M1 9 10 8 13 13 8 18Z M9 16 16 12 13 28 8 28 9 20Z" fill="#0a0a0a" />
          <circle cx="36" cy="27" r="25" fill="#fff" stroke="#444" strokeWidth="1.500" />
          <circle cx="36" cy="27" r="22.500" fill="url(#dial)" stroke="#999" />
          <path d="M42 4 50 8 43 13Z M59 33 55 42 51 35Z M30 50 22 47 29 42Z M13 20 17 12 21 19Z" fill="#fff" />
        </Compass>
      </Canvas>

      <StatusBar><StatusHint>_</StatusHint><span>0.9.0076</span></StatusBar>

      <TaskBar>
        <StartButton aria-label="Start">
          <svg width="20" height="20" viewBox="0 0 20 20" fill="#fff"><path d="M0 2.700 8 1.600V9.500H0Z M9 1.400 20 0V9.500H9Z M0 10.500H8V18.400L0 17.300Z M9 10.500H20V20L9 18.600Z" /></svg>
        </StartButton>
        <Search>
          <svg width="22" height="22" viewBox="0 0 22 22" fill="none" stroke="#111" strokeWidth="1.500"><circle cx="14" cy="8" r="6.500" /><path d="M9.500 12.500 1 21" /></svg>
          <SearchInput aria-label="Buscar" placeholder="Escribe aquí para buscar" />
        </Search>
        {tasks.map((k) => <Task key={k.name} aria-label={k.name} $state={k.state}>{k.icon}</Task>)}
        <Tray>
          <TrayButton aria-label="Hidden icons"><svg width="16" height="9"><path d="M.5 8.500 8 1 15.500 8.500" fill="none" stroke="#fff" strokeWidth="1.300" /></svg></TrayButton>
          <TrayButton aria-label="Meet now">
            <svg width="16" height="18" fill="none" stroke="#fff" strokeWidth="1.200"><rect x="1.500" y="4.500" width="9" height="9" rx="1" /><path d="M10.500 8 14.500 5.500V12.500L10.500 10 M2 2Q6 0 11 2 M2 16Q6 18 11 16" /></svg>
          </TrayButton>
          <TrayButton aria-label="Volume">
            <svg width="20" height="18" fill="none" stroke="#fff" strokeWidth="1.200"><path d="M.5 6.500H4L8.500 2.500V15.500L4 11.500H.5Z M11 6Q13 9 11 12 M14 4Q17.500 9 14 14" /><path d="M17 2Q21 9 17 16" stroke="#777" /></svg>
          </TrayButton>
          <TrayButton aria-label="Network">
            <svg width="16" height="16" fill="none" stroke="#fff" strokeWidth="1.200"><path d="M.5 15Q1 2 15 1" stroke="#aaa" /><path d="M4 15Q5 6 15 5 M8 15Q9 9.500 15 9" /><circle cx="13" cy="14" r="1.300" fill="#fff" /></svg>
          </TrayButton>
          <TrayButton aria-label="Dropbox">
            <svg width="18" height="17" viewBox="0 0 18 17" fill="#fff"><path d="M5 0 9 3 5 6 1 3Z M13 0 17 3 13 6 9 3Z M5 6 9 9 5 12 1 9Z M13 6 17 9 13 12 9 9Z M9 11 13 13.500 9 16.500 5 13.500Z" /></svg>
          </TrayButton>
          <TrayButton $w={44}>ESP</TrayButton>
          <TrayButton $w={94}><time>14:28<br />05-04-2021</time></TrayButton>
          <TrayButton $w={58} aria-label="Notifications">
            <svg width="32" height="32" viewBox="0 0 32 32">
              <path d="M1 1H21V18H9L5 22V18H1Z" fill="#fff" />
              <path d="M5 5.500H17M5 9.500H17M5 13.500H12" stroke="#1d1d1d" strokeWidth="1.300" />
              <circle cx="20" cy="20" r="10" fill="#2b2b2b" stroke="#999" />
              <text x="20" y="25" textAnchor="middle" fontFamily="Noto Sans, sans-serif" fontWeight="700" fontSize="13" fill="#fff">3</text>
            </svg>
          </TrayButton>
          <ShowDesktop aria-label="Show desktop" />
        </Tray>
      </TaskBar>
    </Shell>
  );
}
